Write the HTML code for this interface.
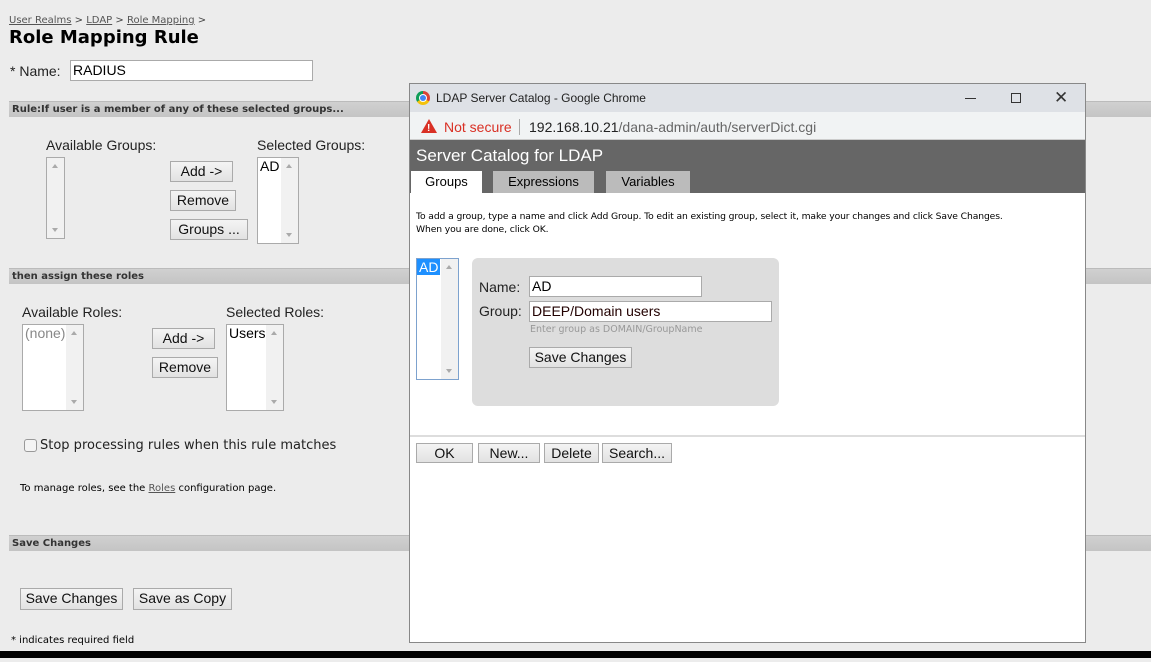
<!DOCTYPE html><html><head><style>
*{box-sizing:border-box}
body{margin:0;width:1151px;height:662px;background:#ececec;font-family:Verdana,"DejaVu Sans",sans-serif;position:relative;overflow:hidden;color:#000}
.a{position:absolute}
.bar{position:absolute;left:9px;right:0;height:16px;background:linear-gradient(#d0d0d0,#c4c4c4);border-top:1px solid #bbb;font-size:10px;font-weight:bold;color:#333;padding:2px 3px;font-family:"DejaVu Sans",sans-serif}
.lab{position:absolute;font-family:"Liberation Sans",Arial,sans-serif;font-size:14px;color:#222}
.btn{position:absolute;background:linear-gradient(#f4f4f4,#e2e2e2);border:1px solid #aaa;font-family:"Liberation Sans",Arial,sans-serif;font-size:14px;text-align:center;color:#111;line-height:18px}
.lst{position:absolute;background:#fff;border:1px solid #aaa;font-family:"Liberation Sans",Arial,sans-serif;font-size:14px;padding:0 2px}
.sb{position:absolute;right:0;top:0;bottom:0;width:17px;background:#f1f1f1}
.sb:before{content:"";position:absolute;left:5px;top:6px;border:3px solid transparent;border-bottom:4px solid #aaa;border-top:0}
.sb:after{content:"";position:absolute;left:5px;bottom:6px;border:3px solid transparent;border-top:4px solid #aaa;border-bottom:0}
u{color:#555}
</style></head><body>
<div class="a" style="left:9px;top:15px;font-size:10px;color:#444"><u>User Realms</u> &gt; <u>LDAP</u> &gt; <u>Role Mapping</u> &gt;</div>
<div class="a" style="left:9px;top:27px;font-size:18px;font-weight:bold">Role Mapping Rule</div>
<div class="lab" style="left:10px;top:63px">* Name:</div>
<div class="a" style="left:70px;top:60px;width:243px;height:21px;background:#fff;border:1px solid #aaa;font-family:'Liberation Sans',sans-serif;font-size:14px;padding:1px 2px">RADIUS</div>
<div class="bar" style="top:101px">Rule:If user is a member of any of these selected groups...</div>
<div class="lab" style="left:46px;top:137px">Available Groups:</div>
<div class="lab" style="left:257px;top:137px">Selected Groups:</div>
<div class="lst" style="left:46px;top:157px;width:19px;height:82px"><div class="sb"></div></div>
<div class="lst" style="left:257px;top:157px;width:42px;height:87px">AD<div class="sb"></div></div>
<div class="btn" style="left:170px;top:161px;width:63px;height:21px">Add -&gt;</div>
<div class="btn" style="left:170px;top:190px;width:66px;height:21px">Remove</div>
<div class="btn" style="left:170px;top:219px;width:78px;height:21px">Groups ...</div>
<div class="bar" style="top:268px">then assign these roles</div>
<div class="lab" style="left:22px;top:304px">Available Roles:</div>
<div class="lab" style="left:226px;top:304px">Selected Roles:</div>
<div class="lst" style="left:22px;top:324px;width:62px;height:87px;color:#888">(none)<div class="sb"></div></div>
<div class="lst" style="left:226px;top:324px;width:58px;height:87px">Users<div class="sb"></div></div>
<div class="btn" style="left:152px;top:328px;width:63px;height:21px">Add -&gt;</div>
<div class="btn" style="left:152px;top:357px;width:66px;height:21px">Remove</div>
<div class="a" style="left:24px;top:439px;width:13px;height:13px;border:1px solid #999;border-radius:3px;background:#f4f4f4"></div>
<div class="lab" style="left:40px;top:438px;font-family:Verdana,'DejaVu Sans',sans-serif;font-size:13px">Stop processing rules when this rule matches</div>
<div class="a" style="left:20px;top:483px;font-size:10px">To manage roles, see the <u>Roles</u> configuration page.</div>
<div class="bar" style="top:535px">Save Changes</div>
<div class="btn" style="left:20px;top:588px;width:103px;height:22px">Save Changes</div>
<div class="btn" style="left:133px;top:588px;width:99px;height:22px">Save as Copy</div>
<div class="a" style="left:11px;top:635px;font-size:10px">* indicates required field</div>
<div class="a" style="left:0;top:651px;width:1151px;height:7px;background:#000"></div>

<div class="a" style="left:409px;top:83px;width:677px;height:560px;border:1px solid #888;background:#fff;font-family:'Liberation Sans',sans-serif">
 <div class="a" style="left:0;top:0;width:675px;height:28px;background:#dee1e6"></div>
 <div class="a" style="left:6px;top:7px;width:14px;height:14px;border-radius:50%;background:conic-gradient(#db4437 0 33%,#f4c20d 0 66%,#0f9d58 0);"></div>
 <div class="a" style="left:10px;top:11px;width:6px;height:6px;border-radius:50%;background:#4285f4;box-shadow:0 0 0 1px #fff"></div>
 <div class="a" style="left:26px;top:7px;font-size:12px;color:#222">LDAP Server Catalog - Google Chrome</div>
 <div class="a" style="left:555px;top:14px;width:11px;height:1px;background:#333"></div>
 <div class="a" style="left:601px;top:9px;width:10px;height:10px;border:1px solid #333"></div>
 <div class="a" style="left:644px;top:4px;font-size:17px;color:#333">✕</div>
 <div class="a" style="left:0;top:28px;width:675px;height:28px;background:#f1f3f4;border-bottom:1px solid #ccc"></div>
 <div class="a" style="left:11px;top:35px;width:0;height:0;border-left:8px solid transparent;border-right:8px solid transparent;border-bottom:14px solid #d93025"></div>
 <div class="a" style="left:17px;top:39px;font-size:10px;color:#fff;font-weight:bold">!</div>
 <div class="a" style="left:34px;top:35px;font-size:14px;color:#d93025">Not secure</div>
 <div class="a" style="left:109px;top:35px;width:1px;height:16px;background:#aaa"></div>
 <div class="a" style="left:119px;top:35px;font-size:14px;color:#222">192.168.10.21<span style="color:#666">/dana-admin/auth/serverDict.cgi</span></div>
 <div class="a" style="left:0;top:56px;width:675px;height:53px;background:#666"></div>
 <div class="a" style="left:6px;top:62px;font-size:17px;color:#fff">Server Catalog for LDAP</div>
 <div class="a" style="left:1px;top:87px;width:71px;height:22px;background:#fff;font-size:13px;text-align:center;line-height:22px">Groups</div>
 <div class="a" style="left:83px;top:87px;width:101px;height:22px;background:#bbb;font-size:13px;text-align:center;line-height:22px">Expressions</div>
 <div class="a" style="left:196px;top:87px;width:84px;height:22px;background:#bbb;font-size:13px;text-align:center;line-height:22px">Variables</div>
 <div class="a" style="left:6px;top:126px;font-size:9.2px;line-height:13px;font-family:Verdana,'DejaVu Sans',sans-serif;width:669px;letter-spacing:-0.1px">To add a group, type a name and click Add Group. To edit an existing group, select it, make your changes and click Save Changes.<br>When you are done, click OK.</div>
 <div class="lst" style="left:6px;top:174px;width:43px;height:122px;border-color:#7da2ce;padding:0"><span style="background:#1e90ff;color:#fff;padding:0 2px">AD</span><div class="sb"></div></div>
 <div class="a" style="left:62px;top:174px;width:307px;height:148px;background:#ddd;border-radius:6px"></div>
 <div class="lab" style="left:69px;top:195px">Name:</div>
 <div class="lab" style="left:69px;top:219px">Group:</div>
 <div class="a" style="left:119px;top:192px;width:173px;height:21px;background:#fff;border:1px solid #aaa;font-size:14px;padding:1px 2px">AD</div>
 <div class="a" style="left:119px;top:217px;width:243px;height:21px;background:#fff;border:1px solid #aaa;font-size:14px;padding:1px 2px;color:#200">DEEP/Domain users</div>
 <div class="a" style="left:120px;top:240px;font-size:9.5px;color:#999;font-family:Verdana,'DejaVu Sans',sans-serif">Enter group as DOMAIN/GroupName</div>
 <div class="btn" style="left:119px;top:263px;width:103px;height:21px">Save Changes</div>
 <div class="a" style="left:0;top:351px;width:675px;height:2px;background:#ddd"></div>
 <div class="btn" style="left:6px;top:359px;width:57px;height:20px">OK</div>
 <div class="btn" style="left:68px;top:359px;width:62px;height:20px">New...</div>
 <div class="btn" style="left:134px;top:359px;width:55px;height:20px">Delete</div>
 <div class="btn" style="left:192px;top:359px;width:70px;height:20px">Search...</div>
</div>
</body></html>
